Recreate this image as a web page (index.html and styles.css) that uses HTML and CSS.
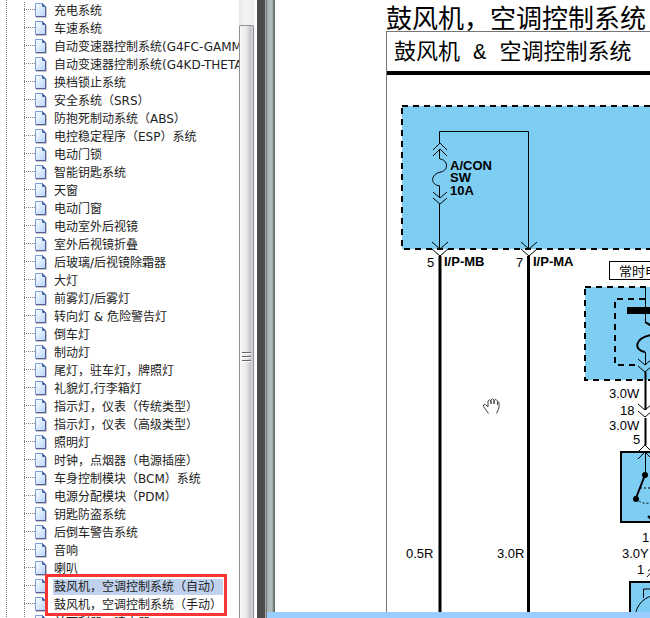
FILE: index.html
```html
<!DOCTYPE html>
<html lang="zh-CN">
<head>
    <meta charset="UTF-8" />
    <meta name="viewport" content="width=device-width, initial-scale=1" />
    <title>鼓风机，空调控制系统</title>
    <link rel="stylesheet" href="styles.css">
</head>
<body>
    <svg class="defs" aria-hidden="true">
        <defs>
            <linearGradient id="paper" x1="0" y1="0" x2="1" y2="1">
                <stop offset="0" stop-color="#ffffff"/>
                <stop offset="1" stop-color="#b4d4fa"/>
            </linearGradient>
            <symbol id="page-icon" viewBox="0 0 12 16">
                <path d="M1 14.500H11.500V4" fill="none" stroke="#c4c4c4"/>
                <path d="M.5 .5H7.500L10.500 3.500V13.500H.5Z" fill="url(#paper)" stroke="#7a9cd8"/>
                <path d="M10.500 4V13.500H1" fill="none" stroke="#535f96"/>
                <path d="M7.500 .5V3.500H10.500Z" fill="#4c6cab" stroke="#4c6cab"/>
            </symbol>
        </defs>
    </svg>

    <nav id="tree-panel" aria-label="目录">
        <ul class="tree">
            <li><a href="#"><svg class="icon"><use href="#page-icon"/></svg><span>充电系统</span></a></li>
            <li><a href="#"><svg class="icon"><use href="#page-icon"/></svg><span>车速系统</span></a></li>
            <li><a href="#"><svg class="icon"><use href="#page-icon"/></svg><span>自动变速器控制系统(G4FC-GAMMA)</span></a></li>
            <li><a href="#"><svg class="icon"><use href="#page-icon"/></svg><span>自动变速器控制系统(G4KD-THETA)</span></a></li>
            <li><a href="#"><svg class="icon"><use href="#page-icon"/></svg><span>换档锁止系统</span></a></li>
            <li><a href="#"><svg class="icon"><use href="#page-icon"/></svg><span>安全系统（SRS）</span></a></li>
            <li><a href="#"><svg class="icon"><use href="#page-icon"/></svg><span>防抱死制动系统（ABS）</span></a></li>
            <li><a href="#"><svg class="icon"><use href="#page-icon"/></svg><span>电控稳定程序（ESP）系统</span></a></li>
            <li><a href="#"><svg class="icon"><use href="#page-icon"/></svg><span>电动门锁</span></a></li>
            <li><a href="#"><svg class="icon"><use href="#page-icon"/></svg><span>智能钥匙系统</span></a></li>
            <li><a href="#"><svg class="icon"><use href="#page-icon"/></svg><span>天窗</span></a></li>
            <li><a href="#"><svg class="icon"><use href="#page-icon"/></svg><span>电动门窗</span></a></li>
            <li><a href="#"><svg class="icon"><use href="#page-icon"/></svg><span>电动室外后视镜</span></a></li>
            <li><a href="#"><svg class="icon"><use href="#page-icon"/></svg><span>室外后视镜折叠</span></a></li>
            <li><a href="#"><svg class="icon"><use href="#page-icon"/></svg><span>后玻璃/后视镜除霜器</span></a></li>
            <li><a href="#"><svg class="icon"><use href="#page-icon"/></svg><span>大灯</span></a></li>
            <li><a href="#"><svg class="icon"><use href="#page-icon"/></svg><span>前雾灯/后雾灯</span></a></li>
            <li><a href="#"><svg class="icon"><use href="#page-icon"/></svg><span>转向灯 &amp; 危险警告灯</span></a></li>
            <li><a href="#"><svg class="icon"><use href="#page-icon"/></svg><span>倒车灯</span></a></li>
            <li><a href="#"><svg class="icon"><use href="#page-icon"/></svg><span>制动灯</span></a></li>
            <li><a href="#"><svg class="icon"><use href="#page-icon"/></svg><span>尾灯，驻车灯，牌照灯</span></a></li>
            <li><a href="#"><svg class="icon"><use href="#page-icon"/></svg><span>礼貌灯,行李箱灯</span></a></li>
            <li><a href="#"><svg class="icon"><use href="#page-icon"/></svg><span>指示灯，仪表（传统类型）</span></a></li>
            <li><a href="#"><svg class="icon"><use href="#page-icon"/></svg><span>指示灯，仪表（高级类型）</span></a></li>
            <li><a href="#"><svg class="icon"><use href="#page-icon"/></svg><span>照明灯</span></a></li>
            <li><a href="#"><svg class="icon"><use href="#page-icon"/></svg><span>时钟，点烟器（电源插座）</span></a></li>
            <li><a href="#"><svg class="icon"><use href="#page-icon"/></svg><span>车身控制模块（BCM）系统</span></a></li>
            <li><a href="#"><svg class="icon"><use href="#page-icon"/></svg><span>电源分配模块（PDM）</span></a></li>
            <li><a href="#"><svg class="icon"><use href="#page-icon"/></svg><span>钥匙防盗系统</span></a></li>
            <li><a href="#"><svg class="icon"><use href="#page-icon"/></svg><span>后倒车警告系统</span></a></li>
            <li><a href="#"><svg class="icon"><use href="#page-icon"/></svg><span>音响</span></a></li>
            <li><a href="#"><svg class="icon"><use href="#page-icon"/></svg><span>喇叭</span></a></li>
            <li class="marked"><a href="#" class="selected"><svg class="icon"><use href="#page-icon"/></svg><span>鼓风机，空调控制系统（自动）</span></a></li>
            <li><a href="#"><svg class="icon"><use href="#page-icon"/></svg><span>鼓风机，空调控制系统（手动）</span></a></li>
            <li><a href="#"><svg class="icon"><use href="#page-icon"/></svg><span>前雨刮器，喷水器</span></a></li>
        </ul>
    </nav>
    <div class="scrollbar"><div class="thumb"><i class="grip"></i></div></div>
    <div class="splitter"></div>

    <main id="viewer">
        <div class="workspace">
            <div class="edge"></div>
            <div class="document">
                <h1>鼓风机，空调控制系统</h1>
                <div class="sheet">
                    <h2>鼓风机 &amp; 空调控制系统</h2>
                    <svg class="diagram" width="400" height="560" viewBox="387 75 400 560" role="img" aria-label="电路图">
                        <!-- I/P junction box -->
                        <rect class="box dashed" x="402" y="106" width="400" height="143"/>
                        <path class="wire" d="M439.500 144V131.500H528.500V248M439.500 149V159M439.500 186V197M439.500 204V248"/>
                        <path class="wire" d="M433 150l7-7 7 7M433 156l7-7 7 7M433 192l7 6 7-6M433 198l7 6 7-6"/>
                        <path class="wire" d="M440 159C448 160 449 170 441 172C430 174 430 185 440 186"/>
                        <path class="wire" d="M432 242l8 7 8-7M432 249l8 7 8-7M521 242l8 7 8-7M521 249l8 7 8-7"/>
                        <g class="label bold">
                            <text x="450" y="170">A/CON</text>
                            <text x="450" y="182">SW</text>
                            <text x="450" y="195">10A</text>
                            <text x="444" y="266">I/P-MB</text>
                            <text x="533" y="266">I/P-MA</text>
                        </g>
                        <path class="cable" d="M440 256V640M528.500 256V640"/>
                        <g class="label">
                            <text x="427" y="267">5</text>
                            <text x="516" y="267">7</text>
                            <text x="406" y="558">0.5R</text>
                            <text x="497" y="558">3.0R</text>
                        </g>

                        <!-- fuse box -->
                        <rect class="tag" x="609.500" y="261.500" width="100" height="18"/>
                        <text class="label" x="619" y="276">常时电源</text>
                        <rect class="box dashed" x="585" y="287" width="120" height="93"/>
                        <path class="dashed" d="M700 299H615V365H640"/>
                        <rect x="627" y="307" width="60" height="7"/>
                        <path class="wire" d="M645.500 287V322M645.500 352V365"/>
                        <path class="wire thick" d="M645 322L655 328M651 335C635 338 633 350 645 352"/>
                        <path class="wire" d="M638 359l7 6 7-6M638 366l7 6 7-6"/>
                        <path class="cable thin" d="M645.500 372V410M645.500 418V445"/>
                        <path class="wire" d="M638 404l7 6 7-6M638 411l7 6 7-6M638 452l7-7 7 7"/>
                        <g class="label">
                            <text x="609" y="398">3.0W</text>
                            <text x="620" y="415">18</text>
                            <text x="609" y="430">3.0W</text>
                            <text x="633" y="444">5</text>
                        </g>

                        <!-- relay -->
                        <rect class="box solid" x="621" y="452" width="100" height="70"/>
                        <path class="wire" d="M638 459l7-7 7 7M645.500 452V475"/>
                        <path class="wire thick" d="M645 475L636 498"/>
                        <circle cx="645" cy="475" r="3"/>
                        <circle cx="636" cy="499" r="3"/>
                        <path class="wire dots" d="M639 501Q643 504 650 503M640 488H650"/>
                        <path class="wire thick" d="M648 516l6 6"/>
                        <g class="label">
                            <text x="642" y="542">1</text>
                            <text x="622" y="558">3.0Y</text>
                            <text x="637" y="574">1</text>
                        </g>
                        <path class="wire" d="M647 577l7-8M648 571l4-3"/>

                        <!-- blower motor -->
                        <rect class="box solid" x="630" y="582" width="100" height="80"/>
                        <path class="wire" d="M643.500 598V589H660"/>
                        <circle class="wire" cx="658" cy="618" r="23"/>

                        <!-- pan tool hand -->
                        <path class="hand" d="M488.500 413.500L483.500 406.500Q483 404 485.500 404.500L488 407V401Q489.500 398.500 491 401V404 400Q492.500 397 494 400V404 400.500Q496 398 497.500 401V405 402.500Q499.500 401 499 404.500V408L496.500 413.500"/>
                    </svg>
                </div>
            </div>
        </div>
        <div class="statusbar"></div>
    </main>
</body>
</html>
```

FILE: styles.css
```css
*, *::after {
    box-sizing: border-box;
}
body {
    margin: 0;
    height: 100vh;
    display: flex;
    overflow: hidden;
    background: #fff;
    color: #222;
    font-family: "DejaVu Sans", "Noto Sans CJK SC", sans-serif;
    font-size: 12px;
}
.defs {
    position: absolute;
    width: 0;
    height: 0;
}

/* tree */
#tree-panel {
    flex: 0 0 239px;
    overflow: hidden;
    padding-left: 6px;
}
.tree {
    list-style: none;
    margin: 0;
    padding: 2px 0 0 18px;
    background: repeating-linear-gradient(#808080 0 1px, transparent 1px 2px) 0 0 / 1px 100% no-repeat;
}
.tree li {
    height: 18px;
    background:
        repeating-linear-gradient(#808080 0 1px, transparent 1px 2px) 0 0 / 1px 100% no-repeat,
        repeating-linear-gradient(90deg, #808080 0 1px, transparent 1px 2px) 0 7px / 11px 1px no-repeat;
}
.tree a {
    display: flex;
    align-items: center;
    height: 18px;
    padding-left: 11px;
    gap: 6px;
    color: inherit;
    text-decoration: none;
    white-space: nowrap;
}
.tree .icon {
    flex: none;
    width: 12px;
    height: 16px;
}
.tree span {
    height: 16px;
    line-height: 16px;
    padding: 0 1px;
}
.tree .selected span {
    background: #c1d2ee;
}
/* red frame drawn over the two marked rows */
.marked {
    position: relative;
}
.marked::after {
    content: "";
    position: absolute;
    left: 21px;
    top: -4px;
    width: 182px;
    height: 42px;
    border: 3px solid #fb3434;
}

/* scrollbar and splitter */
.scrollbar {
    flex: 0 0 18px;
    padding: 25px 3px 0 0;
    background: linear-gradient(90deg, #e4e4e4, #f2f2f2 4px, #efefef 15px, #fff 16px);
}
.thumb {
    height: 100%;
    border: 1px solid #8f8f94;
    border-bottom: 0;
    border-radius: 2px 2px 0 0;
    background: linear-gradient(90deg, #f8f8f8, #e8e8ea 50%, #c4c4cb 80%, #d4d4d8);
    display: flex;
    flex-direction: column;
    align-items: center;
    padding-top: 326px;
}
.grip {
    width: 9px;
    height: 11px;
    background: repeating-linear-gradient(#666 0 1px, #fff 1px 2px, transparent 2px 4px);
}
.splitter {
    flex: 0 0 10px;
    background: linear-gradient(90deg, #4b4b4b 8px, #aaa 8px 9px, #777 9px);
}

/* viewer */
#viewer {
    flex: 1;
    min-width: 0;
    display: flex;
    flex-direction: column;
}
.workspace {
    flex: 1;
    min-height: 0;
    display: flex;
}
.edge {
    flex: 0 0 8px;
    background: linear-gradient(90deg, #a5b0b0, #b4c0c0 5px, #858e8e 6px, #566 8px);
}
.document {
    flex: 1;
    min-width: 0;
    overflow: hidden;
    padding-left: 111px;
    color: #000;
    white-space: nowrap;
}
.statusbar {
    flex: 0 0 6px;
    background: #99ccff;
}
h1, h2 {
    margin: 0;
    font-family: "Liberation Mono", "Noto Sans CJK SC", sans-serif;
    font-weight: normal;
}
h1 {
    height: 31px;
    padding-top: 6px;
    font-size: 26px;
    line-height: 30px;
}
.sheet {
    border: 1px solid #777;
    border-width: 1px 0 0 1px;
}
h2 {
    height: 43px;
    padding-left: 7px;
    border-bottom: 4px solid #000;
    font-size: 22px;
    line-height: 43px;
}

/* diagram */
.diagram {
    display: block;
}
.box {
    fill: #7ecef4;
}
.dashed {
    stroke: #000;
    stroke-width: 2;
    stroke-dasharray: 6 5;
}
path.dashed {
    fill: none;
}
.solid {
    stroke: #000;
    stroke-width: 2;
}
.tag {
    fill: #fff;
    stroke: #000;
}
.wire {
    fill: none;
    stroke: #000;
    stroke-width: 1;
}
.wire.thick {
    stroke-width: 2;
}
.wire.dots {
    stroke-dasharray: 2 2;
}
.cable {
    fill: none;
    stroke: #000;
    stroke-width: 3;
}
.cable.thin {
    stroke-width: 2;
}
.label {
    font-family: "Liberation Sans", "Noto Sans CJK SC", sans-serif;
    font-size: 13px;
}
.label.bold {
    font-weight: bold;
}
.hand {
    fill: #fff;
    stroke: #444;
}
```
